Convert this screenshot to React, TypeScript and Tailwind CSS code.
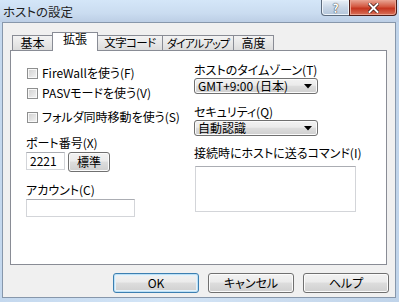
const btn =
  'flex items-center justify-center rounded-[3px] border border-[#707070] bg-[linear-gradient(#f2f2f2,#ebebeb_45%,#dddddd_50%,#cfcfcf)] shadow-[inset_0_0_0_1px_#fbfbfb] text-[12px] leading-none';
const okBtn =
  'flex items-center justify-center rounded-[3px] border border-[#3c7fb1] bg-[linear-gradient(#f2f2f2,#ebebeb_45%,#dddddd_50%,#cfcfcf)] shadow-[inset_0_0_0_1px_#bde0f5,inset_0_0_0_2px_#e4f2fb] text-[12px] leading-none';
const sel =
  'flex items-center justify-between w-[124px] h-[16px] rounded-[3px] border border-[#707070] bg-[linear-gradient(#f2f2f2,#ebebeb_45%,#dddddd_50%,#cfcfcf)] shadow-[inset_0_0_0_1px_#fbfbfb] pl-[3px] pr-[5px] text-[12px] leading-none';
const field = 'border border-[#d3d5d9] border-t-[#abadb3] bg-white';
const tabBase =
  'flex items-center justify-center whitespace-nowrap border border-b-0 border-[#898c95] leading-none';
const tabOff = ' -ml-px h-[15px] bg-[linear-gradient(#f3f3f3,#e8e8e8_50%,#dcdcdc)]';

function Check({ label }: { label: string }) {
  return (
    <div className="flex items-center gap-[4px] h-[12px]">
      <span className="ml-[1px] w-[11px] h-[11px] border border-[#8e8f8f] bg-[linear-gradient(135deg,#cfcfcf,#f4f4f4)] shadow-[inset_0_0_0_1px_#f8f8f8]" />
      <span className="leading-none whitespace-nowrap">{label}</span>
    </div>
  );
}

function Arrow() {
  return (
    <svg width="8" height="5" viewBox="0 0 8 5">
      <path d="M0 0H8L4 4.5Z" fill="#000" />
    </svg>
  );
}

function TitleButtons() {
  return (
    <div className="ml-auto mr-[2px] flex self-start">
      <div className="w-[29px] h-[16px] flex items-center justify-center rounded-bl-[4px] border border-t-0 border-[#5c6b7d] bg-[linear-gradient(#e9f0f8,#c8d6e6_50%,#b3c5da)] shadow-[inset_0_0_0_1px_#eef4fa]">
        <span className="text-[12px] font-bold leading-none text-white [text-shadow:0_0_1px_#333,0_0_1px_#333]">?</span>
      </div>
      <div className="-ml-px w-[48px] h-[16px] flex items-center justify-center rounded-br-[4px] border border-t-0 border-[#4d1d18] bg-[linear-gradient(#e8a594,#d3573f_45%,#c5351f_55%,#d8725a)] shadow-[inset_0_0_0_1px_#eaa08e]">
        <svg width="11" height="10" viewBox="0 0 11 10">
          <path d="M1.5 1L9.5 9M9.5 1L1.5 9" stroke="#3b1410" strokeWidth="3.4" strokeLinecap="square" />
          <path d="M1.5 1L9.5 9M9.5 1L1.5 9" stroke="#fff" strokeWidth="2" strokeLinecap="square" />
        </svg>
      </div>
    </div>
  );
}

export default function App() {
  return (
    <div className="w-[399px] h-[302px] overflow-hidden bg-[linear-gradient(90deg,#c4d8ee,#d3e5f7_40%,#cbdcef_70%,#c0d4ea)] font-['Noto_Sans_CJK_JP',sans-serif] [font-feature-settings:'palt'] text-[12px] text-black">
      <div className="h-[22px] flex bg-[linear-gradient(#d4e6f8,#cadcf0_60%,#bccee5)]">
        <div className="pl-[3px] pt-[6px] text-[12.5px] leading-none text-[#1e1e1e]">ホストの設定</div>
        <TitleButtons />
      </div>
      <div className="ml-[2px] w-[394px] h-[276px] border border-[#8797ab] bg-[#f0f0f0]">
        <div className="ml-[9px] mt-[9px] h-[18px] flex items-end relative z-10">
          <div className={tabBase + ' text-[12px] w-[41px] h-[15px] bg-[linear-gradient(#f3f3f3,#e8e8e8_50%,#dcdcdc)]'}>基本</div>
          <div className={tabBase + ' text-[12px] -ml-px w-[46px] h-[19px] -mb-px bg-white relative z-10 pb-[6px]'}>拡張</div>
          <div className={tabBase + tabOff + ' w-[66px] text-[11.5px] tracking-[-0.6px]'}>文字コード</div>
          <div className={tabBase + tabOff + ' w-[72px] text-[11px] tracking-[-1px]'}>ダイアルアップ</div>
          <div className={tabBase + tabOff + ' w-[41px] text-[12px]'}>高度</div>
        </div>
        <div className="ml-[7px] w-[377px] h-[215px] border border-[#898c95] bg-white flex">
          <div className="pl-[15px] w-[184px] flex flex-col">
            <div className="mt-[16px]">
              <Check label="FireWallを使う(F)" />
            </div>
            <div className="mt-[8px]">
              <Check label="PASVモードを使う(V)" />
            </div>
            <div className="mt-[12px]">
              <Check label="フォルダ同時移動を使う(S)" />
            </div>
            <div className="mt-[13px] h-[14px] leading-[14px]">ポート番号(X)</div>
            <div className="mt-[2px] flex items-start">
              <div className={field + ' w-[39px] h-[18px] pl-[3px] flex items-center leading-none'}>2221</div>
              <div className={btn + ' ml-[3px] w-[42px] h-[20px]'}>標準</div>
            </div>
            <div className="mt-[11px] h-[14px] leading-[14px]">アカウント(C)</div>
            <div className={field + ' mt-[2px] w-[109px] h-[18px]'} />
          </div>
          <div className="flex flex-col">
            <div className="mt-[12px] h-[14px] leading-[14px] -ml-px">ホストのタイムゾーン(T)</div>
            <div className={sel + ' mt-[1px] -ml-px'}>
              <span>GMT+9:00 (日本)</span>
              <Arrow />
            </div>
            <div className="mt-[11px] h-[14px] leading-[14px] -ml-px">セキュリティ(Q)</div>
            <div className={sel + ' mt-[1px] -ml-px'}>
              <span>自動認識</span>
              <Arrow />
            </div>
            <div className="mt-[10px] h-[14px] leading-[14px] -ml-px whitespace-nowrap">接続時にホストに送るコマンド(I)</div>
            <div className={field + ' mt-[6px] w-[161px] h-[46px]'} />
          </div>
        </div>
        <div className="mt-[8px] pr-[6px] flex justify-end gap-[9px]">
          <div className={okBtn + ' w-[86px] h-[20px]'}>OK</div>
          <div className={btn + ' w-[86px] h-[20px]'}>キャンセル</div>
          <div className={btn + ' w-[86px] h-[20px]'}>ヘルプ</div>
        </div>
      </div>
    </div>
  );
}
